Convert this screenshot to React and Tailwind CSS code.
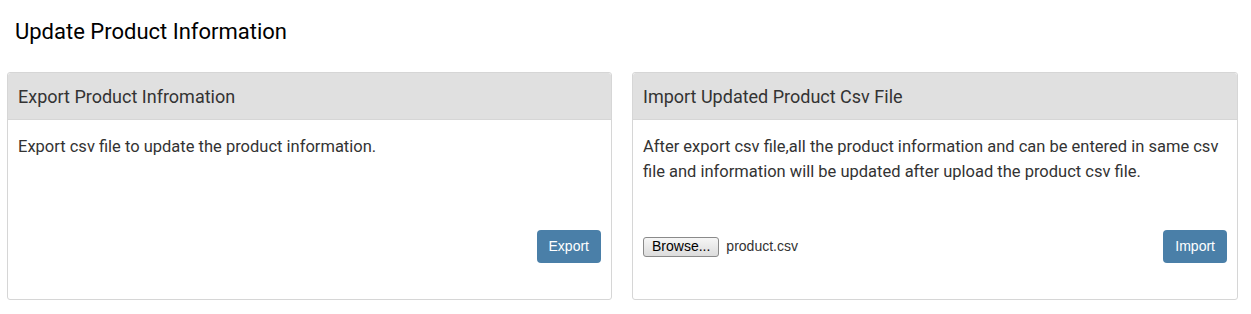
// Product information update page: export / import panels.

function Panel({ title, children, action }) {
  return (
    <section className="flex h-[228px] flex-col rounded-[3px] border border-[#d6d6d6] bg-white">
      <header className="flex h-[47px] shrink-0 items-center rounded-t-[3px] border-b border-[#d6d6d6] bg-[#e0e0e0] px-[10px]">
        <h2 className="text-[18px] text-[#333]">{title}</h2>
      </header>
      <div className="flex flex-1 flex-col px-[10px] pt-[14px] pb-[36px]">
        <div className="text-[16.5px] leading-[25px] text-[#333]">{children}</div>
        <div className="mt-auto">{action}</div>
      </div>
    </section>
  );
}

function ActionButton({ label }) {
  return (
    <button
      className="h-[33px] rounded-[4px] bg-[#4a7fa8] px-[12px] text-[14px] text-white"
      style={{ fontFamily: "'Liberation Sans', Arial, sans-serif" }}
    >
      {label}
    </button>
  );
}

export default function App() {
  return (
    <div
      className="h-[314px] w-[1251px] bg-white"
      style={{ fontFamily: "Roboto, 'Liberation Sans', sans-serif" }}
    >
      <h1 className="px-[15px] pt-[17px] pb-[26px] text-[22px] leading-[29px] text-black">
        Update Product Information
      </h1>
      <div className="grid grid-cols-[605px_606px] gap-[20px] pl-[7px]">
        <Panel
          title="Export Product Infromation"
          action={
            <div className="flex justify-end">
              <ActionButton label="Export" />
            </div>
          }
        >
          <p>Export csv file to update the product information.</p>
        </Panel>
        <Panel
          title="Import Updated Product Csv File"
          action={
            <div className="flex items-center justify-between">
              <div
                className="flex items-center gap-[7px]"
                style={{ fontFamily: "'Liberation Sans', Arial, sans-serif" }}
              >
                <span className="flex h-[20px] items-center rounded-[3px] border border-[#8a8a8a] bg-gradient-to-b from-[#f6f6f6] to-[#dcdcdc] px-[8px] text-[14px] text-black">
                  Browse...
                </span>
                <span className="text-[14px] text-[#333]">product.csv</span>
              </div>
              <ActionButton label="Import" />
            </div>
          }
        >
          <p>
            After export csv file,all the product information and can be entered in same csv
            file and information will be updated after upload the product csv file.
          </p>
        </Panel>
      </div>
    </div>
  );
}
